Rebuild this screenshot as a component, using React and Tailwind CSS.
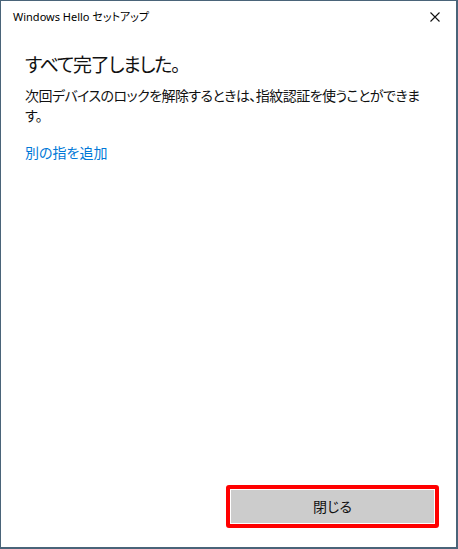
export default function App() {
  return (
    <div className="w-[458px] h-[549px] bg-white border-l border-t border-r-2 border-b-2 border-[#4a6479] flex flex-col font-['Noto_Sans','Noto_Sans_CJK_JP',sans-serif] text-black">
      <div className="h-8 flex items-center justify-between pl-3 shrink-0">
        <span className="text-[11px] [font-feature-settings:'palt']">Windows Hello セットアップ</span>
        <button className="w-[43px] h-8 flex items-center justify-center">
          <svg width="10" height="10" viewBox="0 0 10 10" stroke="#111" strokeWidth="1.1" fill="none">
            <path d="M0.5 0.5 L9.5 9.5 M9.5 0.5 L0.5 9.5" />
          </svg>
        </button>
      </div>

      <div className="px-6 [font-feature-settings:'palt']">
        <h1 className="mt-[18px] text-[19px] leading-7 tracking-[-1.3px] text-[#111]">すべて完了しました。</h1>
        <p className="mt-[7px] text-[14px] leading-5 tracking-[-0.55px] text-[#111] whitespace-nowrap">
          次回デバイスのロックを解除するときは、指紋認証を使うことができま
          <br />
          す。
        </p>
        <a href="#" className="block mt-[17px] text-[14px] leading-5 text-[#0078d7]">別の指を追加</a>
      </div>

      <div className="flex-1" />

      <div className="flex justify-end pr-[17px] pb-[19px]">
        <div className="border-4 border-[#ff0000] rounded-[3px] p-px bg-white">
          <button className="w-[203px] h-[33px] bg-[#cccccc] text-[14px] text-[#111] flex items-center justify-center [font-feature-settings:'palt']">
            閉じる
          </button>
        </div>
      </div>
    </div>
  );
}
